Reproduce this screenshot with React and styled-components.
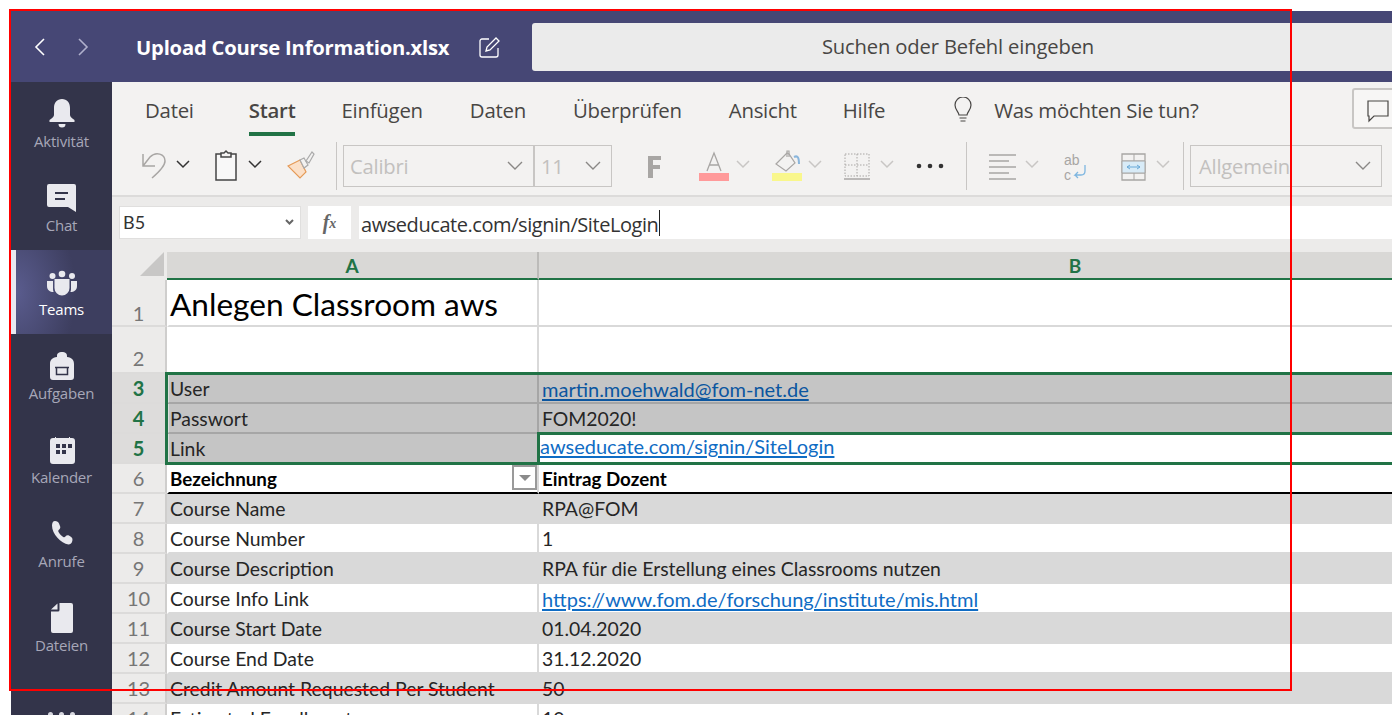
import React from "react";
import styled, { createGlobalStyle } from "styled-components";

const Global = createGlobalStyle`
  html, body { margin: 0; padding: 0; background: #fff; overflow: hidden; }
  * { box-sizing: border-box; }
`;
const UI = `"Open Sans", "Noto Sans", sans-serif`;
const CELL = `"Lato", "Noto Sans", sans-serif`;

const Page = styled.div`
  position: relative; width: 1392px; height: 715px; overflow: hidden;
  padding: 11px 0 0 11px; background: #fff; display: flex; flex-direction: column; font-family: ${UI};
`;
const Annotation = styled.div`
  position: absolute; left: 9px; top: 9px; width: 1283px; height: 682px;
  border: 2px solid #f00; pointer-events: none; z-index: 5;
`;
const TopBar = styled.header`
  height: 71px; flex: none; background: #464775; display: flex; align-items: center; color: #fff;
`;
const NavBtn = styled.svg`
  width: 12px; height: 18px; flex: none; margin-left: ${p => p.$ml}px; fill: none;
  stroke: ${p => p.$dim ? "#b0b0cc" : "#fff"}; stroke-width: 1.6;
`;
const Title = styled.h1`
  margin: 0 0 0 47px; font: 700 20.2px ${UI}; letter-spacing: -0.2px; white-space: nowrap; color: #fff; width: 342px; flex: none;
`;
const EditIcon = styled.svg`
  width: 22px; height: 22px; flex: none; fill: none; stroke: #fff; stroke-width: 1.3;
`;
const Search = styled.div`
  margin-left: 32px; flex: 1; height: 48px; border-radius: 3px 0 0 3px; background: #ebebeb;
  display: flex; align-items: center; justify-content: center; padding: 0 8px 2px 0;
  font: 400 20.2px ${UI}; color: #484644; letter-spacing: -0.15px;
`;
const Body = styled.div`
  flex: 1; display: flex; min-height: 0;
`;
const Rail = styled.nav`
  width: 101px; flex: none; background: #33344a; display: flex; flex-direction: column;
`;
const RailItem = styled.div`
  height: 84px; flex: none; padding-top: 14px; display: flex; flex-direction: column; align-items: center;
  font: 400 15px/18px ${UI}; letter-spacing: -0.2px; color: ${p => p.$active ? "#fff" : "#a7a7b8"};
  background: ${p => p.$active ? "radial-gradient(ellipse 60px 90px at 0 50%, #5a5c8e, #3d3e5f 100%)" : "transparent"};
  border-left: 5px solid ${p => p.$active ? "#e8e8f0" : "transparent"};
  svg { width: 30px; height: 32px; fill: #e9e9ee; display: block; margin-bottom: 4px; margin-left: -5px; overflow: visible; }
  span { margin-left: -5px; }
`;
const RailMore = styled.div`
  margin-top: 42px; display: flex; justify-content: center; gap: 6px;
  i { width: 5px; height: 5px; border-radius: 50%; background: #d8d8e0; }
`;
const Main = styled.main`
  flex: 1; min-width: 0; display: flex; flex-direction: column; background: #f3f2f1;
`;
const Tabs = styled.div`
  height: 58px; flex: none; display: flex; align-items: flex-start; padding-left: 33px; position: relative;
`;
const Tab = styled.div`
  margin-right: ${p => p.$mr}px; height: 54px; padding-top: 14px; white-space: nowrap;
  font: ${p => p.$active ? 600 : 400} 20.4px/28px ${UI}; letter-spacing: -0.25px;
  color: #484644; border-bottom: 4px solid ${p => p.$active ? "#217346" : "transparent"};
`;
const Tell = styled.div`
  display: flex; align-items: center; height: 56px;
  font: 400 20.4px/28px ${UI}; letter-spacing: -0.25px; color: #484644; white-space: nowrap; gap: 20px;
  svg { width: 22px; height: 26px; fill: none; stroke: #484644; stroke-width: 1.2; }
`;
const CommentBtn = styled.div`
  position: absolute; left: 1240px; top: 6px; width: 70px; height: 41px; border: 2px solid #c8c6c4; border-radius: 3px;
  padding: 9px 0 0 12px; background: #f7f6f5;
  svg { display: block; width: 24px; height: 24px; fill: none; stroke: #484644; stroke-width: 1.2; }
`;
const Ribbon = styled.div`
  height: 57px; flex: none; display: flex; align-items: flex-start; padding-left: 30px;
  border-bottom: 2px solid #dcdbda;
`;
const Tool = styled.svg`
  flex: none; margin-left: ${p => p.$ml}px; margin-top: 8px; width: ${p => p.$w}px; height: 36px; fill: none;
`;
const ToolGlyph = styled.text`
  font-family: "Liberation Sans", sans-serif; font-size: 14px; fill: #a8a6a4;
`;
const Chev = styled.svg`
  flex: none; margin-left: ${p => p.$ml}px; margin-top: 19px; width: 14px; height: 10px; fill: none;
  stroke: ${p => p.$dark ? "#333" : "#c8c6c4"}; stroke-width: 1.5;
`;
const Sep = styled.div`
  flex: none; margin-left: ${p => p.$ml}px; width: 1px; height: 48px; margin-top: 2px; background: #c8c6c4;
`;
const Combo = styled.div`
  flex: none; margin-left: ${p => p.$ml}px; margin-top: 5px; width: ${p => p.$w}px; height: 42px;
  border: 1px solid #c8c6c4; display: flex; align-items: center; justify-content: space-between;
  padding: 0 10px 0 ${p => p.$pl ?? 6}px; font: 400 20.2px ${UI}; letter-spacing: -0.2px; color: #c2c0be; overflow: hidden; white-space: nowrap;
`;
const ComboChev = styled.svg`
  flex: none; width: 16px; height: 10px; fill: none; stroke: #8a8886; stroke-width: 1.4;
`;
const FormulaBar = styled.div`
  height: 53px; flex: none; background: #ecebea; display: flex; align-items: center; padding: 0 0 3px 7px;
`;
const NameBox = styled.div`
  width: 182px; height: 33px; background: #fff; border: 1px solid #e0dfde; display: flex; align-items: center;
  justify-content: space-between; padding: 0 6px 0 3px; font: 400 18px ${CELL}; color: #333;
  svg { width: 9px; height: 6px; fill: none; stroke: #666; stroke-width: 2; }
`;
const FxBox = styled.div`
  width: 43px; height: 33px; margin-left: 7px; background: #fff; display: flex; align-items: center; justify-content: center;
  font: italic 700 20px "Liberation Serif", serif; color: #666;
  span { font-size: 14px; margin-top: 4px; }
`;
const FormulaInput = styled.div`
  flex: 1; height: 33px; margin-left: 8px; background: #fff; display: flex; align-items: center; padding: 5px 0 0 2px;
  font: 400 20px ${UI}; letter-spacing: -0.44px; color: #333; white-space: nowrap;
`;
const Caret = styled.i`
  display: inline-block; width: 1px; height: 26px; background: #222; margin: -4px 0 0 1px;
`;
const ColHead = styled.div`
  height: 30px; flex: none; padding-top: 2px; display: flex; background: #ecebea; overflow: hidden;
`;
const Corner = styled.div`
  width: 55px; flex: none; display: flex; justify-content: flex-end; padding-right: 3px;
  svg { width: 24px; height: 24px; fill: #c8c7c6; }
`;
const ColLabel = styled.div`
  width: ${p => p.$w}px; flex: none; background: #d9d8d6;
  border-right: 2px solid #bcbbb9; border-bottom: 2px solid #217346;
  display: flex; align-items: center; justify-content: center; padding-top: 1px;
  font: 700 19px ${CELL}; color: #217346;
`;
const Sheet = styled.div`
  flex: 1; position: relative; overflow: hidden; background: #fff;
`;
const Row = styled.div`
  display: flex; height: ${p => p.$h}px;
`;
const RowHead = styled.div`
  width: 55px; flex: none; background: ${p => p.$sel ? "#dddcdb" : "#ecebea"};
  border-bottom: 2px solid #dcdbda; border-right: 2px solid #cfcecd;
  display: flex; align-items: flex-end; justify-content: center;
  font: ${p => p.$sel ? 700 : 400} 20px/${p => p.$low ? 23 : 27}px ${CELL}; color: ${p => p.$sel ? "#217346" : "#767676"};
`;
const Cell = styled.div`
  flex: none; position: relative; display: flex; align-items: flex-end; white-space: nowrap; overflow: hidden;
  font: ${p => p.$bold ? 700 : 400} ${p => p.$size || (p.$bold ? 18.8 : 19.4)}px/${p => p.$lh || 26}px ${CELL};
  color: ${p => p.$bold || p.$size ? "#000" : "#262626"};
  background: ${p => p.$bg}; border-bottom: 2px solid ${p => p.$line};
`;
const CellA = styled(Cell)`
  width: 372px; padding-left: 1px;
  border-left: 2px solid ${p => p.$lead || "transparent"}; border-right: 2px solid ${p => p.$div};
`;
const CellB = styled(Cell)`
  flex: 1; padding: 0 0 ${p => p.$active ? 3 : 0}px ${p => p.$active ? 1 : 3}px;
`;
const Link = styled.a`
  font-size: 20px; color: ${p => p.$dark ? "#0b56a0" : "#0f6cc4"};
  text-decoration: underline; text-decoration-thickness: 2px; text-underline-offset: 2px;
`;
const FilterBtn = styled.div`
  position: absolute; right: 0; top: 1px; width: 25px; height: 25px; border: 2px solid #9a9a9a; background: #fff;
  display: flex; align-items: center; justify-content: center;
  &::after { content: ""; border: 6px solid transparent; border-top: 6px solid #8a8a8a; border-bottom: 0; }
`;
const Selection = styled.div`
  position: absolute; left: ${p => p.$l}px; top: ${p => p.$t}px; width: 1400px; height: ${p => p.$h}px;
  border: 3px solid #217346; pointer-events: none;
`;

const Chevron = ({ ml, dark }) => (
  <Chev $ml={ml} $dark={dark} viewBox="0 0 14 10"><path d="M1 2l6 6 6-6" /></Chev>
);
const DropArrow = () => <ComboChev viewBox="0 0 16 10"><path d="M1 1l7 7 7-7" /></ComboChev>;

const railItems = [
  ["Aktivität", <path key="a" d="M15 3c-5 0-8 3.500-8 9v7c0 2-2 3-4.500 5v2h25v-2c-2.500-2-4.500-3-4.500-5v-7c0-5.500-3-9-8-9zM11.500 28h7a3.500 3.500 0 0 1-7 0z" />],
  ["Chat", <g key="c"><path d="M2 4h25a2 2 0 0 1 2 2v26l-8-5H2a2 2 0 0 1-2-2V6a2 2 0 0 1 2-2z" /><path d="M8 13h13M8 19h10" stroke="#33344a" strokeWidth="1.800" /></g>],
  ["Teams", <g key="t"><circle cx="5.500" cy="12" r="3" /><circle cx="15" cy="10" r="3.300" /><circle cx="25" cy="12" r="3" /><path d="M7.500 15h15v9a7.500 7.500 0 0 1-15 0zM0 17h6v8c0 1.200.2 2 .6 3C3 28 0 26 0 22zM30 17h-6v8c0 1.200-.2 2-.6 3 3.600 0 6.600-2 6.600-6z" /></g>],
  ["Aufgaben", <g key="u"><path d="M10 9V8c0-3 2-4 5-4s5 1 5 4v1c5 .5 7 3 7 7v13a3 3 0 0 1-3 3H6a3 3 0 0 1-3-3V16c0-4 2-6.500 7-7z" /><path d="M8 19.500h14M9.500 19.500v7h11v-7" fill="none" stroke="#33344a" strokeWidth="1.500" /></g>],
  ["Kalender", <g key="k"><path d="M3 9a3 3 0 0 1 3-3h2V5h1v1h13V5h1v1h2a3 3 0 0 1 3 3v20a3 3 0 0 1-3 3H6a3 3 0 0 1-3-3z" /><path d="M9 12h4v4H9zM15 12h4v4h-4zM21 12h4v4h-4zM9 18h4v4H9zM15 18h4v4h-4z" fill="#33344a" /></g>],
  ["Anrufe", <path key="p" d="M8 5c2 0 3.500 1 4 2.500l1.200 3c.4 1.500-.4 2.500-1.500 3.500-.6.600-.6 1.200 0 2.300 1.300 2.300 2.700 3.700 4.500 4.700 1 .5 1.600.3 2.200-.4 1-1.100 2.100-1.700 3.500-1l2.300 1.500c1.500 1 1.600 3 .8 4.900-.6 1.500-1.800 2.500-3.500 2.500C14 27.500 5 18 5 9.500 5 7 6 5 8 5z" />],
  ["Dateien", <g key="d"><path d="M12.500 3H24a2 2 0 0 1 2 2v26a2 2 0 0 1-2 2H6a2 2 0 0 1-2-2V11.500h7a1.500 1.500 0 0 0 1.500-1.500z" /><path d="M10.500 3.500v6H4z" /></g>],
];

const tabs = [["Datei", 55], ["Start", 46], ["Einfügen", 47], ["Daten", 47], ["Überprüfen", 47], ["Ansicht", 46], ["Hilfe", 67]];

const rows = [
  { n: 1, h: 47, a: "Anlegen Classroom aws", big: true },
  { n: 2, h: 47 },
  { n: 3, sel: true, a: "User", b: <Link $dark>martin.moehwald@fom-net.de</Link> },
  { n: 4, sel: true, a: "Passwort", b: "FOM2020!" },
  { n: 5, sel: true, a: "Link", b: <Link>awseducate.com/signin/SiteLogin</Link>, active: true },
  { n: 6, bold: true, a: "Bezeichnung", b: "Eintrag Dozent", filter: true },
  { n: 7, band: true, a: "Course Name", b: "RPA@FOM" },
  { n: 8, a: "Course Number", b: "1" },
  { n: 9, band: true, a: "Course Description", b: "RPA für die Erstellung eines Classrooms nutzen" },
  { n: 10, a: "Course Info Link", b: <Link>https://www.fom.de/forschung/institute/mis.html</Link> },
  { n: 11, band: true, a: "Course Start Date", b: "01.04.2020" },
  { n: 12, a: "Course End Date", b: "31.12.2020" },
  { n: 13, band: true, a: "Credit Amount Requested Per Student", b: "50" },
  { n: 14, a: "Estimated Enrollment", b: "10" },
];

function SheetRow({ r }) {
  const bg = r.sel ? "#c5c5c5" : r.band ? "#d9d9d9" : "#fff";
  const line = r.bold ? "#000" : r.sel ? "#a6a6a6" : "#d9d9d9";
  const div = r.sel ? "#a6a6a6" : "#d9d9d9";
  return (
    <Row $h={r.h || 30}>
      <RowHead $sel={r.sel} $low={r.big}>{r.n}</RowHead>
      <CellA $bg={bg} $line={line} $div={div} $lead={r.sel ? "#dedede" : undefined} $bold={r.bold}
        $size={r.big ? 31.6 : undefined} $lh={r.big ? 42 : undefined}>
        {r.a}{r.filter && <FilterBtn />}
      </CellA>
      <CellB $active={r.active} $bg={r.active ? "#fff" : bg} $line={line} $bold={r.bold}>{r.b}</CellB>
    </Row>
  );
}

export default function App() {
  return (
    <Page>
      <Global />
      <TopBar>
        <NavBtn $ml={23} viewBox="0 0 12 18"><path d="M10 1L2 9l8 8" /></NavBtn>
        <NavBtn $ml={31} $dim viewBox="0 0 12 18"><path d="M2 1l8 8-8 8" /></NavBtn>
        <Title>Upload Course Information.xlsx</Title>
        <EditIcon viewBox="0 0 22 22"><path d="M11 3H4a2 2 0 0 0-2 2v14a2 2 0 0 0 2 2h14a2 2 0 0 0 2-2v-7" /><path d="M8 15l1-4L18 2l3 3-9 9z" /></EditIcon>
        <Search>Suchen oder Befehl eingeben</Search>
      </TopBar>
      <Body>
        <Rail>
          {railItems.map(([label, icon]) => (
            <RailItem key={label} $active={label === "Teams"}>
              <svg viewBox="0 0 30 32">{icon}</svg>
              <span>{label}</span>
            </RailItem>
          ))}
          <RailMore><i /><i /><i /></RailMore>
        </Rail>
        <Main>
          <Tabs>
            {tabs.map(([t, mr]) => <Tab key={t} $mr={mr} $active={t === "Start"}>{t}</Tab>)}
            <Tell>
              <svg viewBox="0 0 22 26"><path d="M7 18c0-3-4-5-4-10a8 8 0 0 1 16 0c0 5-4 7-4 10zM7.500 21h7M8.500 24h5" /></svg>
              Was möchten Sie tun?
            </Tell>
            <CommentBtn><svg viewBox="0 0 24 24"><path d="M2 2h20v15H8l-5 5v-5H2z" /></svg></CommentBtn>
          </Tabs>
          <Ribbon>
            <Tool $ml={0} $w={24} viewBox="0 0 24 36" stroke="#a8a6a4" strokeWidth="1.500"><path d="M1 6v12h12M1 18L8 9C14 3 23 6 23 13 23 18 17 24 10 30" /></Tool>
            <Chevron ml={10} dark />
            <Tool $ml={25} $w={22} viewBox="0 0 22 36" stroke="#444" strokeWidth="1.500"><path d="M6 6H1v26h20V6h-5M6 9V5h3l2-2 2 2h3v4z" fill="#f8f8f8" /></Tool>
            <Chevron ml={11} dark />
            <Tool $ml={25} $w={28} viewBox="0 0 28 36" strokeWidth="1.200"><path d="M1 18l12-6 6 12-6 6z" fill="#fbe0c8" stroke="#e59a57" /><path d="M13 12l4 8 4-3-4-7z" stroke="#aaa" fill="#f3f2f1" /><path d="M19 13l6-9 2 2-5 9z" stroke="#aaa" /></Tool>
            <Sep $ml={21} />
            <Combo $ml={6} $w={191}>Calibri<DropArrow /></Combo>
            <Combo $ml={0} $w={78}>11<DropArrow /></Combo>
            <Tool $ml={33} $w={18} viewBox="0 0 18 36"><path d="M3 8h13v4H8v5h7v4H8v9H3z" fill="#a8a6a4" /></Tool>
            <Tool $ml={36} $w={30} viewBox="0 0 30 36" stroke="#a8a6a4" strokeWidth="1.300"><path d="M8 23L15 5l7 18M10.500 17h9" /><path d="M0 25h30v8H0z" fill="#ff9a9a" stroke="none" /></Tool>
            <Chevron ml={7} />
            <Tool $ml={22} $w={30} viewBox="0 0 30 36" stroke="#a8a6a4" strokeWidth="1.200"><path d="M4 16L15 5l2 1 6 9-9 8z" /><path d="M15 9V3h2v6" /><path d="M22 9c4-2 5 1 5 7" stroke="#8ab6dc" strokeWidth="2" /><path d="M0 25h30v8H0z" fill="#f9f78c" stroke="none" /></Tool>
            <Chevron ml={6} />
            <Tool $ml={22} $w={26} viewBox="0 0 26 36"><path d="M1 6h24v22H1zM13 6v22M1 17h24" stroke="#a8a6a4" strokeDasharray="1.500 1.500" /><path d="M0 31h26" stroke="#a8a6a4" strokeWidth="1.500" /></Tool>
            <Chevron ml={10} />
            <Tool $ml={22} $w={28} viewBox="0 0 28 36"><circle cx="3" cy="18" r="2.300" fill="#333" /><circle cx="14" cy="18" r="2.300" fill="#333" /><circle cx="25" cy="18" r="2.300" fill="#333" /></Tool>
            <Sep $ml={22} />
            <Tool $ml={22} $w={27} viewBox="0 0 27 36" stroke="#a8a6a4" strokeWidth="1.500"><path d="M0 7h27M0 13h20M0 19h27M0 25h20M0 31h27" /></Tool>
            <Chevron ml={9} />
            <Tool $ml={24} $w={26} viewBox="0 0 26 36"><ToolGlyph x="1" y="17">ab</ToolGlyph><ToolGlyph x="1" y="32">c</ToolGlyph><path d="M22 17v6c0 3-2 4-4 4h-6l3-3m-3 3l3 3" stroke="#7eb6e0" strokeWidth="1.300" /></Tool>
            <Tool $ml={32} $w={25} viewBox="0 0 25 36"><path d="M1 6h23v26H1z" stroke="#a8a6a4" strokeWidth="1.300" /><path d="M1 13h23M1 25h23M13 6v7M13 25v7" stroke="#a8a6a4" /><path d="M1 13h23v12H1z" fill="#d8ebf7" stroke="#a8a6a4" /><path d="M6 19h13M6 19l3-2m-3 2l3 2M19 19l-3-2m3 2l-3 2" stroke="#68a9d8" /></Tool>
            <Chevron ml={10} />
            <Sep $ml={13} />
            <Combo $ml={6} $w={192} $pl={8}>Allgemein<DropArrow /></Combo>
          </Ribbon>
          <FormulaBar>
            <NameBox>B5<svg viewBox="0 0 9 6"><path d="M1 1l3.500 3.500L8 1" /></svg></NameBox>
            <FxBox>f<span>x</span></FxBox>
            <FormulaInput>awseducate.com/signin/SiteLogin<Caret /></FormulaInput>
          </FormulaBar>
          <ColHead>
            <Corner><svg viewBox="0 0 24 24"><path d="M24 0v24H0z" /></svg></Corner>
            <ColLabel $w={372}>A</ColLabel>
            <ColLabel $w={1074}>B</ColLabel>
          </ColHead>
          <Sheet>
            {rows.map(r => <SheetRow key={r.n} r={r} />)}
            <Selection $l={53} $t={92} $h={93} />
            <Selection $l={425} $t={152} $h={33} />
          </Sheet>
        </Main>
      </Body>
      <Annotation />
    </Page>
  );
}
